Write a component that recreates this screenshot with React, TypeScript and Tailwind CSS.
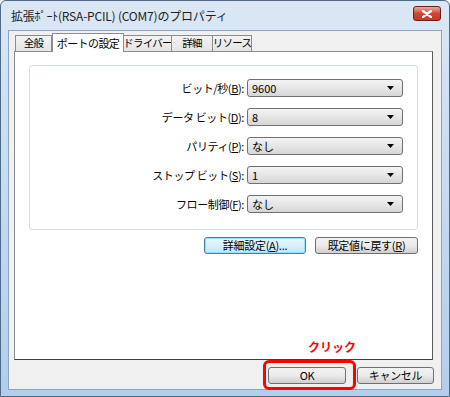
const jp = { fontFamily: '"Noto Sans CJK JP", "Liberation Sans", sans-serif' };

function Combo({ value }: { value: string }) {
  return (
    <div className="flex h-[18px] w-[156px] items-center justify-between rounded-[3px] border border-[#707070] bg-gradient-to-b from-[#f4f4f4] via-[#e6e6e6] to-[#d6d6d6] pl-[4px] pr-[8px]">
      <span className="text-[11px] leading-none text-black">{value}</span>
      <svg width="7" height="4" viewBox="0 0 7 4">
        <path d="M0 0 H7 L3.5 4 Z" fill="#000" />
      </svg>
    </div>
  );
}

function Row({ label, acc, value }: { label: string; acc: string; value: string }) {
  return (
    <div className="flex items-center justify-end">
      <span className="mr-[3px] whitespace-nowrap text-[11px] leading-none tracking-[-0.4px] text-black">
        {label}(<u>{acc}</u>):
      </span>
      <Combo value={value} />
    </div>
  );
}

function Btn({ children, focus, w }: { children: React.ReactNode; focus?: boolean; w: string }) {
  return (
    <div
      className={
        "flex h-[17px] items-center justify-center whitespace-nowrap rounded-[3px] border text-[11px] leading-none tracking-[-0.3px] text-black " +
        w +
        (focus
          ? " border-[#3c7fb1] bg-gradient-to-b from-[#eaf6fd] via-[#d9f0fc] to-[#bee6fd] shadow-[inset_0_0_0_1px_#9de0fd]"
          : " border-[#707070] bg-gradient-to-b from-[#f2f2f2] via-[#ebebeb] to-[#cfcfcf]")
      }
    >
      {children}
    </div>
  );
}

export default function App() {
  const tabs = ["全般", "ポートの設定", "ドライバー", "詳細", "リソース"];
  const widths = ["w-[37px]", "w-[72px]", "w-[49px]", "w-[42px]", "w-[40px]"];

  return (
    <div
      className="relative flex h-[397px] w-[450px] flex-col overflow-hidden rounded-t-[6px] border border-[#4d6a88] bg-gradient-to-b from-[#dbe7f4] via-[#c6daf0] to-[#b3cdec]"
      style={jp}
    >
      {/* title bar */}
      <div className="flex h-[29px] items-center justify-between pl-[10px] pr-[8px]">
        <span className="whitespace-nowrap text-[12px] leading-none tracking-[-0.2px] text-[#1e1e1e]">
          拡張ﾎﾟｰﾄ(RSA-PCIL) (COM7)のプロパティ
        </span>
        <div className="mb-[4px] flex h-[15px] w-[28px] items-center justify-center rounded-[3px] border border-[#6d1d1d] bg-gradient-to-b from-[#e9a99c] via-[#cf4530] to-[#c33a25]">
          <svg width="10" height="8" viewBox="0 0 10 8">
            <path d="M1 1 L9 7 M9 1 L1 7" stroke="#fff" strokeWidth="2.2" strokeLinecap="round" />
          </svg>
        </div>
      </div>

      {/* client area */}
      <div className="mx-[7px] mb-[6px] flex flex-1 flex-col border border-[#8aa6c6] bg-[#f0f0f0] pl-[5px] pr-[8px] pt-[2px]">
        {/* tabs */}
        <div className="relative z-10 flex h-[18px] items-end">
          {tabs.map((t, i) =>
            i === 1 ? (
              <div
                key={t}
                className={"-mb-px flex h-[19px] items-center justify-center whitespace-nowrap border border-b-0 border-[#898c95] bg-white text-[11px] leading-none tracking-[-0.6px] text-black " + widths[i]}
              >
                {t}
              </div>
            ) : (
              <div
                key={t}
                className={
                  "flex h-[16px] items-center justify-center whitespace-nowrap border border-b-0 border-[#898c95] bg-gradient-to-b from-[#f3f3f3] to-[#e4e4e4] text-[10.5px] leading-none tracking-[-0.8px] text-black " +
                  widths[i] +
                  (i === 0 ? " ml-[1px]" : "") +
                  (i > 1 ? " -ml-px" : "")
                }
              >
                {t}
              </div>
            )
          )}
        </div>

        {/* tab page */}
        <div className="flex h-[309px] flex-col border border-[#898c95] border-b-[#404040] border-r-[#5a5a5a] bg-white px-[14px] pt-[13px]">
          <div className="flex flex-col gap-[11px] rounded-[3px] border border-[#d5dfe5] pb-[16px] pr-[14px] pt-[13px]">
            <Row label="ビット/秒" acc="B" value="9600" />
            <Row label="データ ビット" acc="D" value="8" />
            <Row label="パリティ" acc="P" value="なし" />
            <Row label="ストップ ビット" acc="S" value="1" />
            <Row label="フロー制御" acc="F" value="なし" />
          </div>
          <div className="mt-[7px] flex justify-end gap-[9px]">
            <Btn focus w="w-[102px]">
              詳細設定(<u>A</u>)...
            </Btn>
            <Btn w="w-[103px]">
              既定値に戻す(<u>R</u>)
            </Btn>
          </div>
        </div>

        {/* bottom buttons */}
        <div className="mt-[7px] flex justify-end gap-[11px]">
          <Btn w="w-[78px]">OK</Btn>
          <div className="-mr-[1px]">
            <Btn w="w-[77px]">キャンセル</Btn>
          </div>
        </div>
      </div>

      {/* annotation */}
      <span className="absolute left-[307px] top-[340px] text-[12px] font-bold leading-none text-[#ff0000]">
        クリック
      </span>
      <div className="absolute left-[262px] top-[359px] h-[30px] w-[93px] rounded-[6px] border-[3px] border-[#ff0000]" />
    </div>
  );
}
